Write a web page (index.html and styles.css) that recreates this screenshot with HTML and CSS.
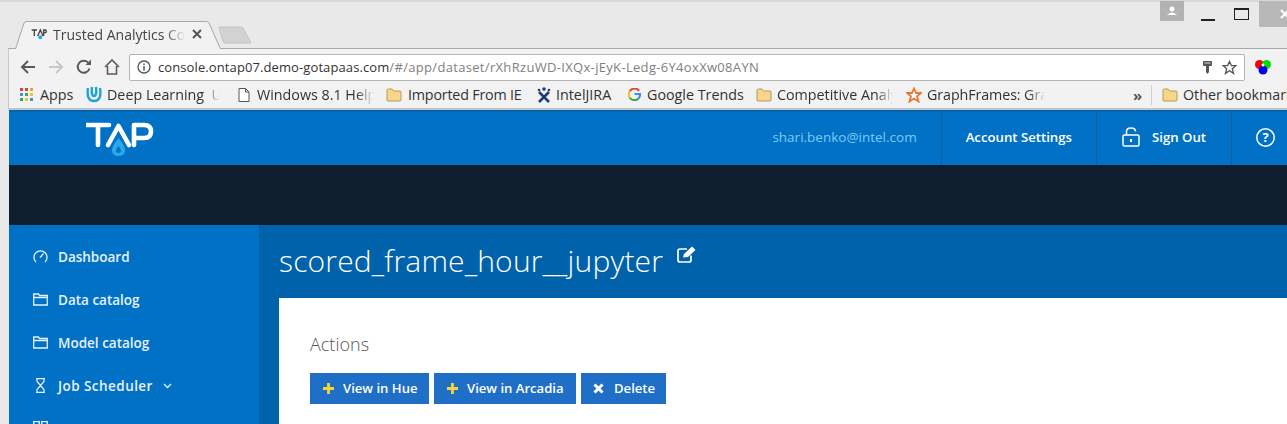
FILE: index.html
```html
<!DOCTYPE html>
<html lang="en">
<head>
  <meta charset="UTF-8" />
  <title>Trusted Analytics Console</title>
  <link rel="stylesheet" href="styles.css">
</head>
<body>

  <!-- Browser title strip -->
  <div class="titlebar">
    <div class="tab">
      <svg class="tab-shape" width="206" height="28" viewBox="0 0 206 28"><path d="M0.5 28 L9 2 Q9.500 0.500 12 0.500 L191 0.500 Q193 0.500 194 2 L205.500 28" fill="#f2f2f2" stroke="#a8a8a8"/></svg>
      <svg class="tab-logo" width="16" height="12" viewBox="0 0 24 18"><path d="M1 3H9M5 3V12M10 12L14 3L18 12M19 12V3H22Q24 5 22 7H19" fill="none" stroke="#444" stroke-width="2"/><circle cx="14" cy="14" r="3" fill="#29a9e8"/></svg>
      <span class="tab-title">Trusted Analytics Console</span>
      <svg class="tab-close" width="10" height="10" viewBox="0 0 10 10"><path d="M1 1L9 9M9 1L1 9" stroke="#555" stroke-width="2"/></svg>
    </div>
    <svg class="new-tab" width="34" height="18" viewBox="0 0 36 18" preserveAspectRatio="none"><path d="M1 1H24Q26 1 27 3L35 17H8Q6 17 5 15Z" fill="#d2d2d2" stroke="#c2c2c2"/></svg>
    <div class="win-controls">
      <div class="win-profile"><svg width="12" height="10" viewBox="0 0 12 10"><circle cx="6" cy="3" r="2.500" fill="#fff"/><path d="M1 9Q6 4 11 9Z" fill="#fff"/></svg></div>
      <div class="win-min"></div>
      <div class="win-max"></div>
      <div class="win-close"><svg width="28" height="26" viewBox="0 0 28 26"><path d="M22 9L30 17M30 9L22 17" stroke="#fff" stroke-width="2"/></svg></div>
    </div>
  </div>

  <div class="toolbar">
    <svg class="nav-icon" width="16" height="14" viewBox="0 0 16 14"><path d="M15 7H2M8 1L2 7L8 13" fill="none" stroke="#5a5a5a" stroke-width="2"/></svg>
    <svg class="nav-icon" width="16" height="14" viewBox="0 0 16 14"><path d="M1 7H14M8 1L14 7L8 13" fill="none" stroke="#c8c8c8" stroke-width="2"/></svg>
    <svg class="nav-icon" width="16" height="16" viewBox="0 0 16 16"><path d="M13.500 9.500A6 6 0 1 1 12 3.500" fill="none" stroke="#5a5a5a" stroke-width="2"/><path d="M9.500 6H15V0.500Z" fill="#5a5a5a"/></svg>
    <svg class="nav-icon" width="16" height="16" viewBox="0 0 16 16"><path d="M1 8L8 1L15 8M3.500 7V15H12.500V7" fill="none" stroke="#5a5a5a" stroke-width="1.600"/></svg>
    <div class="omnibox">
      <svg class="info-icon" width="14" height="14" viewBox="0 0 14 14"><circle cx="7" cy="7" r="6" fill="none" stroke="#555" stroke-width="1.300"/><path d="M7 6V10.500M7 3.500V5" stroke="#555" stroke-width="1.500"/></svg>
      <span class="url"><span class="url-host">console.ontap07.demo-gotapaas.com</span>/#/app/dataset/rXhRzuWD-IXQx-jEyK-Ledg-6Y4oxXw08AYN</span>
      <svg class="key-icon" width="9" height="13" viewBox="0 0 9 13"><path d="M0 1Q0 0 1 0H8Q9 0 9 1V4Q9 5 8 5H6V11L4.500 13L3 11V5H1Q0 5 0 4Z" fill="#555"/><rect x="1.500" y="1.500" width="6" height="1" fill="#ddd"/></svg>
      <svg class="star-icon" width="15" height="15" viewBox="0 0 16 16"><path d="M8 1.500L10 6H14.800L11 9.300L12.300 14.300L8 11.500L3.700 14.300L5 9.300L1.200 6H6Z" fill="none" stroke="#555" stroke-width="1.400"/></svg>
    </div>
    <svg class="ext-icon" width="16" height="16" viewBox="0 0 16 16"><circle cx="4.500" cy="5.500" r="4.500" fill="#f00"/><circle cx="11.500" cy="5.500" r="4.500" fill="#0d0"/><circle cx="8" cy="11" r="4.500" fill="#00e"/><circle cx="8" cy="6" r="1.500" fill="#fff"/></svg>
  </div>

  <div class="bookmarks">
    <svg class="bm-icon apps-icon" width="14" height="14" viewBox="0 0 14 14">
      <rect width="3" height="3" fill="#d9433b"/><rect x="5" width="3" height="3" fill="#d9433b"/><rect x="10" width="3" height="3" fill="#e8a33d"/>
      <rect y="5" width="3" height="3" fill="#4a8ed8"/><rect x="5" y="5" width="3" height="3" fill="#3fa35a"/><rect x="10" y="5" width="3" height="3" fill="#e8c33d"/>
      <rect y="10" width="3" height="3" fill="#3fa35a"/><rect x="5" y="10" width="3" height="3" fill="#e8c33d"/><rect x="10" y="10" width="3" height="3" fill="#4a8ed8"/>
    </svg>
    <span class="bm bm-apps">Apps</span>
    <svg class="bm-icon u-icon" width="16" height="17" viewBox="0 0 16 17"><path d="M2 2Q0 15 8 15Q16 15 14 2M6 1Q5 10 8 10Q11 10 10 1" fill="none" stroke="#1ba3d8" stroke-width="2.400"/></svg>
    <span class="bm bm-fade bm-deep">Deep Learning&nbsp;&nbsp;Udacity</span>
    <svg class="bm-icon doc-icon" width="12" height="14" viewBox="0 0 12 14"><path d="M1 .5H7.500L11 4V13.500H1ZM7.500 .5V4H11" fill="#fff" stroke="#555"/></svg>
    <span class="bm bm-fade bm-win">Windows 8.1 Help and</span>
    <svg class="bm-icon folder-icon fold-a" width="16" height="14" viewBox="0 0 16 14"><path d="M1 2.500Q1 1 2.500 1H6L7.500 3H14Q15 3 15 4V12Q15 13 14 13H2Q1 13 1 12Z" fill="#f5d78a" stroke="#b89a55"/></svg>
    <span class="bm bm-import">Imported From IE</span>
    <svg class="bm-icon jira-icon" width="14" height="16" viewBox="0 0 14 16"><circle cx="7" cy="2" r="1.800" fill="#1c3f73"/><circle cx="2" cy="3" r="1.300" fill="#1c3f73"/><circle cx="12" cy="3" r="1.300" fill="#1c3f73"/><path d="M2 5L12 15M12 5L2 15" stroke="#1c3f73" stroke-width="2.600"/></svg>
    <span class="bm bm-jira">IntelJIRA</span>
    <svg class="bm-icon g-icon" width="13" height="13" viewBox="0 0 14 14"><path d="M12 3A6 6 0 0 0 2 3.500" fill="none" stroke="#ea4335" stroke-width="2.200"/><path d="M2 3.500A6 6 0 0 0 2 10.500" fill="none" stroke="#fbbc05" stroke-width="2.200"/><path d="M2 10.500A6 6 0 0 0 11.500 11" fill="none" stroke="#34a853" stroke-width="2.200"/><path d="M11.500 11Q13 9.500 13 6.500H7" fill="none" stroke="#4285f4" stroke-width="2.200"/></svg>
    <span class="bm bm-google">Google Trends</span>
    <svg class="bm-icon folder-icon fold-b" width="16" height="14" viewBox="0 0 16 14"><path d="M1 2.500Q1 1 2.500 1H6L7.500 3H14Q15 3 15 4V12Q15 13 14 13H2Q1 13 1 12Z" fill="#f5d78a" stroke="#b89a55"/></svg>
    <span class="bm bm-fade bm-comp">Competitive Analysis</span>
    <svg class="bm-icon star-bm" width="16" height="16" viewBox="0 0 16 16"><path d="M8 1.500L10 6H15L11 9.300L12.500 14.500L8 11.500L3.500 14.500L5 9.300L1 6H6Z" fill="#fff" stroke="#e57a35" stroke-width="1.800"/></svg>
    <span class="bm bm-fade bm-graph">GraphFrames: Graph</span>
    <span class="bm-more">&raquo;</span>
    <span class="bm-sep"></span>
    <svg class="bm-icon folder-icon fold-c" width="16" height="14" viewBox="0 0 16 14"><path d="M1 2.500Q1 1 2.500 1H6L7.500 3H14Q15 3 15 4V12Q15 13 14 13H2Q1 13 1 12Z" fill="#f5d78a" stroke="#b89a55"/></svg>
    <span class="bm bm-other">Other bookmarks</span>
  </div>

  <!-- The page inside the browser -->
  <div class="page">
    <header class="app-header">
      <svg class="logo" width="68" height="36" viewBox="0 0 68 36">
        <path d="M1 3H23M12 3V23" fill="none" stroke="#fff" stroke-width="4.600" stroke-linecap="round"/>
        <path d="M22 23L32.500 4L43 23" fill="none" stroke="#fff" stroke-width="4.600" stroke-linecap="round" stroke-linejoin="round"/>
        <path d="M48 23V3H58Q65 3 65 9.500Q65 16 58 16H48" fill="none" stroke="#fff" stroke-width="4.600" stroke-linecap="round" stroke-linejoin="round"/>
        <path d="M32.500 16Q39 24 39 28Q39 34 32.500 34Q26 34 26 28Q26 24 32.500 16Z" fill="#29a9e8"/>
        <path d="M32.500 24Q35 27 35 29Q35 31 32.500 31Q30 31 30 29Q30 27 32.500 24Z" fill="#0071c5"/>
      </svg>
      <div class="user-email">shari.benko@intel.com</div>
      <div class="header-cell">Account Settings</div>
      <div class="header-cell signout">
        <svg width="18" height="20" viewBox="0 0 18 20"><rect x="1" y="8" width="16" height="11" rx="1.500" fill="none" stroke="#fff" stroke-width="1.500"/><path d="M4.500 8V4.500Q4.500 1 9 1Q13.500 1 13.500 4.500" fill="none" stroke="#fff" stroke-width="1.500"/><path d="M9 12V15" stroke="#fff" stroke-width="2"/></svg>
        Sign Out
      </div>
      <div class="header-cell help">
        <svg width="19" height="19" viewBox="0 0 19 19"><circle cx="9.500" cy="9.500" r="8.700" fill="none" stroke="#fff" stroke-width="1.500"/><text x="9.500" y="14" text-anchor="middle" class="help-mark">?</text></svg>
      </div>
    </header>

    <div class="dark-band"></div>

    <div class="app-body">
      <nav class="sidebar">
        <div class="nav-row">
          <svg width="15" height="15" viewBox="0 0 15 15"><path d="M3 13A6.500 6.500 0 1 1 12 13" fill="none" stroke="#e6f2fb" stroke-width="1.300"/><path d="M7 8.500L10.500 4.500" stroke="#e6f2fb" stroke-width="1.300"/></svg>
          Dashboard
        </div>
        <div class="nav-row">
          <svg width="15" height="13" viewBox="0 0 15 13"><path d="M.7 1H5.500L6.500 2.500H14.300V12H.7ZM.7 4.500H14.300" fill="none" stroke="#e6f2fb" stroke-width="1.300"/></svg>
          Data catalog
        </div>
        <div class="nav-row">
          <svg width="15" height="13" viewBox="0 0 15 13"><path d="M.7 1H5.500L6.500 2.500H14.300V12H.7ZM.7 4.500H14.300" fill="none" stroke="#e6f2fb" stroke-width="1.300"/></svg>
          Model catalog
        </div>
        <div class="nav-row nav-job">
          <svg width="15" height="15" viewBox="0 0 15 15"><path d="M3 .7H12M3 14.300H12M4 1V3.500L11 11.500V14M11 1V3.500L4 11.500V14" fill="none" stroke="#e6f2fb" stroke-width="1.200"/></svg>
          Job Scheduler
          <svg width="9" height="6" viewBox="0 0 9 6"><path d="M1 1L4.500 4.500L8 1" fill="none" stroke="#e6f2fb" stroke-width="1.300"/></svg>
        </div>
        <div class="nav-row">
          <svg width="15" height="15" viewBox="0 0 15 15"><path d="M.7 .7H6.300V6.300H.7ZM8.700 .7H14.300V6.300H8.700ZM.7 8.700H6.300V14.300H.7ZM8.700 8.700H14.300V14.300H8.700Z" fill="none" stroke="#e6f2fb" stroke-width="1.300"/></svg>
        </div>
      </nav>

      <main class="main">
        <div class="title-row">
          <h1 class="page-title">scored_frame_hour__jupyter</h1>
          <svg class="edit-icon" width="21" height="17" viewBox="0 0 19 17"><path d="M14 9.500V14Q14 16 12 16H3Q1 16 1 14V5Q1 3 3 3H10" fill="none" stroke="#fff" stroke-width="1.700"/><path d="M6 11.500L7 8L15 .5L18.500 4L11 11Z" fill="#fff"/></svg>
        </div>
        <section class="card">
          <h2 class="card-title">Actions</h2>
          <div class="actions">
            <button class="action-btn btn-hue"><svg class="plus" width="11" height="11" viewBox="0 0 11 11"><path d="M5.500 0V11M0 5.500H11" stroke="#f3d63a" stroke-width="2.800"/></svg>View in Hue</button>
            <button class="action-btn btn-arcadia"><svg class="plus" width="11" height="11" viewBox="0 0 11 11"><path d="M5.500 0V11M0 5.500H11" stroke="#f3d63a" stroke-width="2.800"/></svg>View in Arcadia</button>
            <button class="action-btn btn-delete"><svg class="x-icon" width="11" height="11" viewBox="0 0 11 11"><path d="M1.500 1.500L9.500 9.500M9.500 1.500L1.500 9.500" stroke="#fff" stroke-width="3"/></svg>Delete</button>
          </div>
        </section>
      </main>
    </div>
  </div>

</body>
</html>
```

FILE: styles.css
```css
html, body {
  margin: 0;
  height: 424px;
  overflow: hidden;
}

body {
  font-family: "Open Sans", "Noto Sans", sans-serif;
  background-color: #e9e9e9;
  color: #333;
  width: 1287px;
}

/* title strip */
.titlebar {
  display: flex;
  align-items: flex-end;
  height: 46px;
  padding: 0 0 0 15px;
  background-color: #e9e9e9;
  border-top: 2px solid #d8d8d8;
  position: relative;
}

.tab {
  position: relative;
  display: flex;
  align-items: center;
  width: 206px;
  height: 26px;
  padding-bottom: 2px;
  margin-bottom: -1px;
  z-index: 2;
}

.tab-shape {
  position: absolute;
  left: 0;
  top: 0;
}

.tab-logo {
  position: relative;
  margin-left: 16px;
}

.tab-title {
  position: relative;
  width: 132px;
  margin-left: 6px;
  font-family: "Open Sans", sans-serif;
  font-size: 14px;
  color: #444;
  white-space: nowrap;
  overflow: hidden;
  -webkit-mask-image: linear-gradient(to right, #000 85%, transparent);
  mask-image: linear-gradient(to right, #000 85%, transparent);
}

.tab-close {
  position: relative;
  margin-left: 7px;
}

.new-tab {
  margin: 0 0 4px -3px;
}

.win-controls {
  display: flex;
  align-self: flex-start;
  margin-left: auto;
  height: 27px;
}

.win-profile {
  display: flex;
  align-items: center;
  justify-content: center;
  width: 24px;
  height: 20px;
  margin-top: -1px;
  background-color: #b2b2b2;
}

.win-min {
  width: 14px;
  height: 2px;
  margin: 17px 0 0 17px;
  background-color: #222;
}

.win-max {
  width: 13px;
  height: 9px;
  margin: 6px 0 0 19px;
  border: 1px solid #222;
  border-top-width: 2px;
}

.win-close {
  width: 28px;
  height: 26px;
  margin: -1px 0 0 10px;
  background-color: #b8b8b8;
}

/* toolbar */
.toolbar {
  display: flex;
  align-items: center;
  height: 28px;
  margin-left: 8px;
  padding: 4px 0 0 11px;
  background-color: #f2f2f2;
  border-top: 1px solid #a8a8a8;
  border-left: 1px solid #c8c8c8;
}

.nav-icon {
  flex: none;
  margin-right: 12px;
}

.omnibox {
  display: flex;
  align-items: center;
  width: 1114px;
  height: 25px;
  margin-left: -3px;
  background-color: #fff;
  border: 1px solid #b4b4b4;
  border-radius: 2px;
}

.info-icon {
  margin-left: 7px;
}

.url {
  margin-left: 7px;
  font-size: 13px;
  color: #808080;
  white-space: nowrap;
  letter-spacing: 0.32px;
}

.url-host {
  color: #333;
  letter-spacing: 0.1px;
}

.key-icon {
  margin-left: auto;
}

.star-icon {
  margin: 0 7px 0 10px;
}

.ext-icon {
  margin-left: 10px;
}

/* bookmarks bar */
.bookmarks {
  display: flex;
  align-items: center;
  height: 27px;
  margin-left: 8px;
  background-color: #f2f2f2;
  border-left: 1px solid #c8c8c8;
  border-bottom: 2px solid #b8c6d4;
  font-size: 14.300px;
  color: #333;
  white-space: nowrap;
  overflow: hidden;
}

.bm-icon {
  flex: none;
}

.bm {
  flex: none;
  overflow: hidden;
}

.bm-fade {
  -webkit-mask-image: linear-gradient(to right, #000 86%, transparent);
  mask-image: linear-gradient(to right, #000 86%, transparent);
}

.apps-icon { margin-left: 11px; }
.bm-apps { width: 38px; margin-left: 6px; }
.u-icon { margin-left: 8px; }
.bm-deep { width: 113px; margin-left: 5px; }
.doc-icon { margin-left: 18px; }
.bm-win { width: 116px; margin-left: 7px; }
.fold-a { margin-left: 13px; }
.bm-import { width: 118px; margin-left: 6px; letter-spacing: -0.2px; }
.jira-icon { margin-left: 11px; }
.bm-jira { width: 60px; margin-left: 5px; }
.g-icon { margin-left: 12px; }
.bm-google { width: 100px; margin-left: 6px; }
.fold-b { margin-left: 9px; }
.bm-comp { width: 116px; margin-left: 5px; }
.star-bm { margin-left: 13px; }
.bm-graph { width: 118px; margin-left: 5px; letter-spacing: -0.1px; }
.fold-c { margin-left: 10px; }
.bm-other { margin-left: 5px; }

.bm-more {
  flex: none;
  width: 12px;
  margin-left: 88px;
  font-size: 15px;
  font-weight: bold;
  color: #555;
}

.bm-sep {
  flex: none;
  width: 1px;
  height: 20px;
  margin-left: 6px;
  background-color: #cfcfcf;
}

/* page */
.page {
  margin-left: 9px;
}

.app-header {
  display: flex;
  height: 53px;
  background-color: #0071c5;
  border-top: 2px solid #0b62a4;
  color: #fff;
  font-size: 13.200px;
}

.logo {
  margin: 10px 0 0 77px;
}

.user-email {
  display: flex;
  align-items: center;
  margin-left: auto;
  padding: 0 24px 3px 0;
  font-size: 13.500px;
  color: #7accf8;
}

.header-cell {
  display: flex;
  align-items: center;
  gap: 12px;
  padding: 0 24px 3px;
  border-left: 1px solid #0a5f9f;
  font-weight: 600;
}

.signout {
  padding-left: 25px;
  padding-right: 25px;
}

.help {
  width: 31px;
  padding-right: 0;
}

.help-mark {
  font-family: "Open Sans", sans-serif;
  font-size: 13px;
  font-weight: 700;
  fill: #fff;
}

.dark-band {
  height: 60px;
  background-color: #0f1e2e;
}

.app-body {
  display: flex;
  height: 199px;
  overflow: hidden;
}

.sidebar {
  flex: none;
  width: 250px;
  padding-top: 10px;
  background-color: #0071c5;
  color: #e6f2fb;
  font-size: 13.500px;
  font-weight: 600;
}

.nav-row {
  display: flex;
  align-items: center;
  gap: 10px;
  height: 43px;
  padding-left: 24px;
  white-space: nowrap;
}

.nav-job {
  letter-spacing: 0.45px;
}

.main {
  flex: 1;
  padding-left: 20px;
  background-color: #0062ab;
  overflow: hidden;
}

.title-row {
  display: flex;
  height: 73px;
}

.page-title {
  margin: 14px 0 0 0;
  font-size: 30px;
  font-weight: 300;
  letter-spacing: 0.17px;
  line-height: 44px;
  color: #fff;
  white-space: nowrap;
}

.edit-icon {
  margin: 21px 0 0 13px;
}

.card {
  height: 91px;
  padding: 35px 0 0 31px;
  background-color: #fff;
}

.card-title {
  margin: 0;
  font-size: 18px;
  font-weight: 300;
  line-height: 22px;
  color: #555;
}

.actions {
  display: flex;
  gap: 5px;
  margin-top: 18px;
}

.action-btn {
  display: flex;
  align-items: center;
  box-sizing: border-box;
  height: 31px;
  padding: 0 0 2px 12px;
  border: none;
  background-color: #1f6fc6;
  color: #fff;
  font-family: "Open Sans", sans-serif;
  font-size: 13.100px;
  font-weight: 600;
  white-space: nowrap;
}

.btn-hue { width: 119px; }
.btn-arcadia { width: 142px; }
.btn-delete { width: 85px; }

.plus {
  margin: 2px 9px 0 1px;
}

.x-icon {
  margin: 2px 10px 0 0;
}
```
